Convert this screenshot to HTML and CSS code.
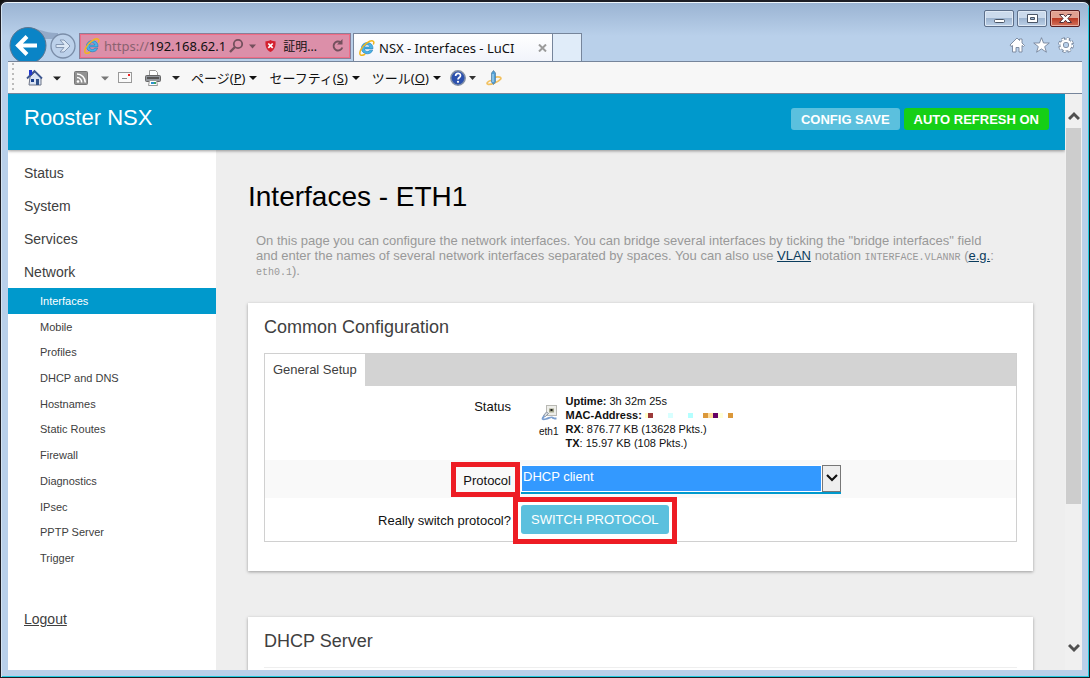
FILE: index.html
```html
<!DOCTYPE html>
<html lang="en">
<head>
<meta charset="utf-8">
<title>NSX - Interfaces - LuCI</title>
<link rel="stylesheet" href="styles.css">
</head>
<body>
<svg class="defs" width="0" height="0" aria-hidden="true">
  <symbol id="ie" viewBox="0 0 16 16">
    <path d="M13.9 8.9H5.4c.2 1.7 1.400 2.500 2.900 2.500 1.200 0 2-.4 2.600-1.200h2.800c-.8 2.300-2.800 3.600-5.400 3.600-3.400 0-5.900-2.300-5.900-5.500 0-3.300 2.500-5.700 5.900-5.700 3.600 0 5.900 2.500 5.600 6.300zM5.500 7h5.300c-.2-1.400-1.200-2.200-2.600-2.200S5.800 5.600 5.500 7z" fill="#49b3e6" stroke="#1d78b5" stroke-width=".6"/>
    <path d="M14.300 4.500C15.200 2.700 15 1.200 13.700.9 10.500.3 4.600 4.600 2 9.300.4 12.200.4 14.700 2 15.200c1 .3 2.600-.2 4.200-1.200" fill="none" stroke="#f2b61c" stroke-width="1.500"/>
  </symbol>
</svg>
<div class="window">
  <header class="chrome">
    <div class="titlebar">
      <button class="win-btn" aria-label="Minimize"><svg width="30" height="16"><rect x="10.500" y="8.500" width="10" height="3" rx="1" fill="#fff" stroke="#4a5566"/></svg></button>
      <button class="win-btn" aria-label="Maximize"><svg width="30" height="16"><path d="M10.500 3.500h10v8h-10zM13.500 6.500h4v2h-4z" fill="#fff" fill-rule="evenodd" stroke="#4a5566"/></svg></button>
      <button class="win-btn win-close" aria-label="Close"><svg width="30" height="16"><path d="M9.500 3.500h4l2 2.200 2-2.200h4l-3.600 4 3.600 4h-4l-2-2.200-2 2.200h-4l3.600-4z" fill="#fff" stroke="#50303a"/></svg></button>
    </div>
    <div class="navrow">
      <svg class="nav-buttons" width="70" height="34" viewBox="0 0 70 34">
        <path d="M20 .5c12 1 17 6 30 5.500v6H30z" fill="#94aac8"/>
        <circle cx="20" cy="18.500" r="18" fill="#0a84c6" stroke="#5d7690"/>
        <path d="M10 18.500h19M19 9.500l-9 9 9 9" fill="none" stroke="#fff" stroke-width="4"/>
        <circle cx="55" cy="19" r="12" fill="#bcd1ea" stroke="#7a8da8" stroke-width="1.300"/>
        <path d="M48 17.500h8l-4-4.500h4l6 6-6 6h-4l4-4.500h-8z" fill="#dce8f5" stroke="#8497b2"/>
      </svg>
      <div class="address">
        <svg width="16" height="16"><use href="#ie"/></svg>
        <span class="url"><span class="scheme">https://</span>192.168.62.1</span>
        <svg class="search" width="28" height="16" viewBox="0 0 28 16"><circle cx="9" cy="6" r="4.200" fill="none" stroke="#74505d" stroke-width="1.800"/><path d="M6 9l-5 5" stroke="#74505d" stroke-width="2.400"/><path d="M20 6.500h7l-3.500 4z" fill="#74505d"/></svg>
        <svg class="shield" width="11" height="12" viewBox="0 0 11 12"><path d="M5.500 0c2 1.200 3.500 1.200 5 1.200C11 6 9.500 10 5.500 12 1.500 10 0 6 .5 1.200 2 1.200 3.500 1.200 5.500 0z" fill="#d4202e"/><path d="M3.300 3.500l4.400 4.400m0-4.400L3.300 7.900" stroke="#fff" stroke-width="1.700"/></svg>
        <span class="cert">証明...</span>
        <svg class="reload" width="14" height="14" viewBox="0 0 14 14"><path d="M11.300 8.500a4.500 4.500 0 1 1-1.600-5.200" fill="none" stroke="#74505d" stroke-width="1.900"/><path d="M11.500 0v5.500H6z" fill="#74505d"/></svg>
      </div>
      <div class="tab">
        <svg width="16" height="16"><use href="#ie"/></svg>
        <span class="tab-title">NSX - Interfaces - LuCI</span>
        <svg width="9" height="8" viewBox="0 0 9 8"><path d="M1 .5l7 7m0-7l-7 7" stroke="#9b9b9b" stroke-width="2"/></svg>
      </div>
      <div class="new-tab"></div>
      <div class="tools">
        <svg width="16" height="16" viewBox="0 0 16 16"><path d="M1 8l7-7 2.500 2.500V2h2.500v4l2.500 2.500-1 1-1.500-1V15H10v-4.500H7V15H3.500V8.500l-1.500 1z" fill="#fff" stroke="#76859b" stroke-width=".9"/></svg>
        <svg width="17" height="16" viewBox="0 0 17 16"><path d="M8.500.7l2 5.300h5.800l-4.600 3.600 1.700 5.600-4.900-3.300-4.900 3.300 1.700-5.600L.7 6h5.800z" fill="#fff" stroke="#76859b" stroke-width=".9"/></svg>
        <svg width="16" height="16" viewBox="0 0 16 16"><g fill="none"><circle cx="8" cy="8" r="6.400" stroke="#76859b" stroke-width="3" stroke-dasharray="3.200 1.827"/><circle cx="8" cy="8" r="4.300" stroke="#76859b" stroke-width="4.200"/><circle cx="8" cy="8" r="6.300" stroke="#fff" stroke-width="1.800" stroke-dasharray="2.200 2.748"/><circle cx="8" cy="8" r="4.300" stroke="#fff" stroke-width="2.600"/></g></svg>
      </div>
    </div>
  </header>
  <nav class="commandbar">
    <span class="grip"></span>
    <svg class="cmd home" width="36" height="18" viewBox="0 0 36 18"><path d="M4 8l5-5 6 6v7H3z" fill="#d9e3f3" stroke="#6f7688"/><path d="M1 9.500L8.500 2l7.500 7.500" fill="none" stroke="#3d568f" stroke-width="1.800"/><path d="M3 1h3v5H3z" fill="#2338ce"/><path d="M5 10h3v3H5z" fill="#183d8b"/><path d="M10 10h3v6h-3z" fill="#31528b"/><path d="M27 7.500h8l-4 4z" fill="#222"/></svg>
    <svg class="cmd feed" width="36" height="16" viewBox="0 0 36 16"><rect x=".5" y="1.500" width="13" height="13" rx="1" fill="#929292" stroke="#777"/><circle cx="4" cy="11.500" r="1.300" fill="#fff"/><path d="M3 7.500a5 5 0 0 1 4.700 5M3 4a8.500 8.500 0 0 1 8.300 8.500" fill="none" stroke="#fff" stroke-width="1.600"/><path d="M27 6.500h8l-4 4z" fill="#777"/></svg>
    <svg class="cmd mail" width="15" height="11" viewBox="0 0 15 11"><rect x=".5" y=".5" width="13" height="10" fill="#fafafa" stroke="#999"/><path d="M4 6.500h5" stroke="#888"/><path d="M10 2h2v2h-2z" fill="#e22"/></svg>
    <svg class="cmd print" width="36" height="16" viewBox="0 0 36 16"><path d="M4.500.5h6l2 2v4h-8z" fill="#fff" stroke="#999"/><rect x=".5" y="5.500" width="15" height="6" rx="1" fill="#92969c" stroke="#666"/><path d="M2 8h12" stroke="#555" stroke-width="2"/><path d="M4.500 10.500h7l1 5h-9z" fill="#fff" stroke="#999"/><path d="M6 12h3v2H6z" fill="#2e92cf"/><path d="M9 12h2v2H9z" fill="#3aa36b"/><path d="M27 6h8l-4 4z" fill="#222"/></svg>
    <button class="menu">ページ(<u>P</u>)<i class="caret"></i></button>
    <button class="menu">セーフティ(<u>S</u>)<i class="caret"></i></button>
    <button class="menu">ツール(<u>O</u>)<i class="caret"></i></button>
    <svg class="cmd help" width="28" height="16" viewBox="0 0 28 16"><circle cx="8" cy="8" r="7.200" fill="#2c51ae" stroke="#8491a5" stroke-width="1.500"/><path d="M5.600 6c0-3.400 5-3.400 4.900-.3C10.400 7.500 8 7.500 8 9.500" fill="none" stroke="#fff" stroke-width="1.700"/><circle cx="8" cy="11.800" r="1.100" fill="#fff"/><path d="M19 6h7l-3.500 4z" fill="#333"/></svg>
    <svg class="cmd" width="16" height="16" viewBox="0 0 16 16"><path d="M8 7.500c5-1.500 8 0 6.500 1.800-2 2.300-9.500 5.700-12.500 5-2.500-.8.500-3.300 3-3.800" fill="none" stroke="#f2c15f" stroke-width="1.700"/><path d="M5.500 3l2-2.500 2 2.500v9l-2 2.500-2-2.500z" fill="#4e9fd6" stroke="#517b9e" stroke-width=".7"/><path d="M7 4v8" stroke="#bfe4fa"/></svg>
  </nav>
  <div class="viewport">
    <div class="page">
      <header class="app-header">
        <a class="brand" href="#">Rooster NSX</a>
        <button class="badge">CONFIG SAVE</button>
        <button class="badge badge-on">AUTO REFRESH ON</button>
      </header>
      <div class="app-body">
        <nav class="sidebar">
          <ul class="menu-list">
            <li><a href="#">Status</a></li>
            <li><a href="#">System</a></li>
            <li><a href="#">Services</a></li>
            <li><a href="#">Network</a></li>
          </ul>
          <ul class="submenu">
            <li class="active"><a href="#">Interfaces</a></li>
            <li><a href="#">Mobile</a></li>
            <li><a href="#">Profiles</a></li>
            <li><a href="#">DHCP and DNS</a></li>
            <li><a href="#">Hostnames</a></li>
            <li><a href="#">Static Routes</a></li>
            <li><a href="#">Firewall</a></li>
            <li><a href="#">Diagnostics</a></li>
            <li><a href="#">IPsec</a></li>
            <li><a href="#">PPTP Server</a></li>
            <li><a href="#">Trigger</a></li>
          </ul>
          <a class="logout" href="#">Logout</a>
        </nav>
        <main class="content">
          <h1>Interfaces - ETH1</h1>
          <p class="intro">On this page you can configure the network interfaces. You can bridge several interfaces by ticking the "bridge interfaces" field and enter the names of several network interfaces separated by spaces. You can also use <a href="#">VLAN</a> notation <code>INTERFACE.VLANNR</code> (<a href="#">e.g.</a>: <code>eth0.1</code>).</p>
          <section class="card">
            <h2>Common Configuration</h2>
            <div class="panel">
              <div class="tabs"><a class="tab-item" href="#">General Setup</a></div>
              <div class="row row-status">
                <span class="label">Status</span>
                <div class="field status">
                  <div class="iface">
                    <svg width="16" height="16" viewBox="0 0 16 16"><rect x="5.500" y=".5" width="10" height="10" fill="#eeeeea" stroke="#b9b9b4"/><path d="M8 3.500h5v4H8z" fill="#a4a78c"/><path d="M9.500 4h2v2h-2z" fill="#1d1d1d"/><path d="M5.500 7l2 1.500-3 3-2-1z" fill="#d7dce2" stroke="#8d97a1"/><path d="M3.500 11C0 14 1.500 15 5 14s6-2.500 6.500-1.500S13 13.500 15.500 13.500" fill="none" stroke="#7c9fd0" stroke-width="1.800"/></svg>
                    <span>eth1</span>
                  </div>
                  <div class="stats">
                    <b>Uptime:</b> 3h 32m 25s<br>
                    <b>MAC-Address:</b><svg class="mosaic" width="92" height="5"><path d="M3 0h4v5H3z" fill="#ffffc8"/><path d="M6 0h5v5H6z" fill="#9c3a3a"/><path d="M26 0h5v5h-5z" fill="#d8ffff"/><path d="M46 0h5v5h-5z" fill="#b4ffff"/><path d="M61 0h5v5h-5z" fill="#db983a"/><path d="M66 0h5v5h-5z" fill="#ffdb98"/><path d="M71 0h5v5h-5z" fill="#660066"/><path d="M76 0h5v5h-5z" fill="#ffffd8"/><path d="M86 0h5v5h-5z" fill="#db983a"/></svg><br>
                    <b>RX</b>: 876.77 KB (13628 Pkts.)<br>
                    <b>TX</b>: 15.97 KB (108 Pkts.)
                  </div>
                </div>
              </div>
              <div class="row row-protocol">
                <label class="label marked" for="protocol">Protocol</label>
                <div class="field select-box">
                  <select id="protocol"><option>DHCP client</option></select>
                  <span class="select-arrow"><svg width="12" height="8" viewBox="0 0 12 8"><path d="M1 1l5 5 5-5" fill="none" stroke="#111" stroke-width="2.200"/></svg></span>
                </div>
              </div>
              <div class="row row-switch">
                <span class="label">Really switch protocol?</span>
                <div class="field"><span class="marked"><button class="switch">SWITCH PROTOCOL</button></span></div>
              </div>
            </div>
          </section>
          <section class="card">
            <h2>DHCP Server</h2>
            <div class="rule"></div>
          </section>
        </main>
      </div>
    </div>
    <div class="scrollbar">
      <svg width="12" height="34" viewBox="0 0 12 34"><path d="M1 25l5-5 5 5" fill="none" stroke="#505050" stroke-width="3"/></svg>
      <div class="track"><div class="thumb"></div></div>
      <svg width="12" height="34" viewBox="0 0 12 34"><path d="M1 9l5 5 5-5" fill="none" stroke="#505050" stroke-width="3"/></svg>
    </div>
  </div>
</div>
</body>
</html>
```
FILE: styles.css
```css
* { box-sizing: border-box; }
body {
  margin: 0;
  background: #111;
  font-family: "Liberation Sans", Arial, sans-serif;
  color: #404040;
}
svg { display: block; flex: none; }
.defs { position: absolute; }
button { font-family: inherit; cursor: pointer; }
ul { margin: 0; padding: 0; list-style: none; }

.window {
  display: flex;
  flex-direction: column;
  height: 100vh;
  padding: 0 6px 6px;
  background: linear-gradient(#9ab3d2, #b9d0ea 34px);
  border: 1px solid #1d1d24;
  border-top-width: 2px;
  border-radius: 7px 7px 0 0;
  box-shadow: inset 0 1px #eef5fb, inset 1px 0 #d5e4f2, inset -1px -1px #21cbe0;
}
.titlebar {
  display: flex;
  justify-content: flex-end;
  gap: 3px;
  padding: 8px 3px 0 0;
  height: 25px;
}
.win-btn {
  width: 30px;
  height: 17px;
  padding: 0;
  overflow: hidden;
  border: 1px solid #5d6f8a;
  border-radius: 2px;
  background: linear-gradient(#cbdaec 45%, #9db4d0 50%, #bdd1e8);
  box-shadow: inset 0 0 0 1px #dfe9f5;
}
.win-btn svg { margin: -1px; }
.win-close {
  border-color: #591c1f;
  background: linear-gradient(#e0a091 45%, #b93a25 50%, #d4735c);
  box-shadow: inset 0 0 0 1px #e8b0a4;
}
.navrow {
  display: flex;
  height: 34px;
  font: 13px "Noto Sans", "Noto Sans CJK JP", sans-serif;
  color: #111;
}
.nav-buttons { margin: 0 1px; }
.address {
  display: flex;
  align-items: center;
  width: 272px;
  height: 26px;
  margin: 6px 2px 0 0;
  padding: 0 5px 0 4px;
  background: #dc8fa9;
  border: 1px solid #8a7f98;
  box-shadow: inset 0 0 0 1px #ef6c86;
}
.url { margin-left: 4px; }
.scheme { color: #8a6270; }
.search { margin-left: 3px; }
.shield { margin-left: 8px; }
.cert { margin-left: 7px; font-size: 12px; }
.reload { margin-left: auto; }
.tab {
  display: flex;
  align-items: center;
  width: 200px;
  height: 28px;
  margin-top: 6px;
  padding: 0 5px;
  background: linear-gradient(#fff, #f1f4fb);
  border: 1px solid #76859b;
  border-bottom: 0;
}
.tab-title { flex: 1; margin-left: 4px; }
.new-tab {
  width: 29px;
  height: 28px;
  margin-top: 6px;
  background: #e0ecf9;
  border: solid #76859b;
  border-width: 1px 1px 0 0;
}
.tools {
  display: flex;
  gap: 8px;
  margin: 10px 9px 0 auto;
}

.commandbar {
  position: relative;
  display: flex;
  align-items: center;
  flex: none;
  height: 33px;
  margin: 0 1px;
  background: #f7f7f7;
  border: solid #76859b;
  border-width: 1px 0;
}
.grip {
  width: 2px;
  height: 30px;
  margin: 0 12px 0 4px;
  background: repeating-linear-gradient(#bbb 0 2px, #f7f7f7 2px 5px);
}
.home { margin-right: 12px; }
.feed { margin-right: 8px; }
.mail { margin-right: 12px; }
.print { margin-right: 10px; }
.menu {
  display: flex;
  align-items: center;
  margin-right: 12px;
  padding: 0;
  background: none;
  border: 0;
  color: #111;
  font: 13px "Noto Sans", "Noto Sans CJK JP", sans-serif;
}
.caret {
  margin-left: 4px;
  border: 4px solid transparent;
  border-top-color: #111;
  border-bottom-width: 0;
}
.help { margin: 0 8px 0 -3px; }

.viewport {
  display: flex;
  flex: 1;
  min-height: 0;
  margin: 0 1px 1px;
  background: #eee;
}
.page {
  display: flex;
  flex-direction: column;
  flex: 1;
  min-width: 0;
  overflow: hidden;
}
.app-header {
  position: relative;
  display: flex;
  align-items: flex-start;
  gap: 4px;
  flex: none;
  height: 56px;
  padding: 14px 16px 0;
  background: #0099cc;
  box-shadow: 0 1px 3px rgba(0, 0, 0, .4);
}
.brand {
  margin-right: auto;
  margin-top: -4px;
  color: #fff;
  font-size: 22px;
  line-height: 28px;
  text-decoration: none;
}
.badge {
  height: 22px;
  padding: 0 10px;
  border: 0;
  border-radius: 3px;
  background: #5bc0de;
  color: #fff;
  font-size: 13px;
  font-weight: bold;
}
.badge-on { background: #16cf16; }
.app-body {
  display: flex;
  flex: 1;
  min-height: 0;
}
.sidebar {
  width: 208px;
  flex: none;
  padding-top: 7px;
  background: #fff;
}
.sidebar a { color: #404040; text-decoration: none; }
.menu-list {
  display: grid;
  gap: 1px;
  padding-left: 16px;
  font-size: 14px;
  line-height: 32px;
}
.submenu {
  display: grid;
  min-height: 283px;
  font-size: 11px;
  line-height: 24px;
}
.submenu li { display: flex; align-items: center; padding-left: 32px; }
.submenu .active { background: #0099cc; }
.submenu .active a { color: #fff; }
.sidebar .logout {
  display: inline-block;
  margin: 40px 16px;
  font-size: 14px;
  line-height: 16px;
  text-decoration: underline;
}
.content {
  flex: 1;
  min-width: 0;
  padding: 31px 32px 0;
  overflow: hidden;
}
h1 {
  margin: 0 0 20px;
  color: #000;
  font-size: 28px;
  font-weight: normal;
  line-height: 32px;
}
.intro {
  margin: 0 0 25px;
  padding: 0 32px 0 8px;
  color: #999;
  font-size: 13px;
  line-height: 15px;
}
.intro a { color: #0b3c5d; }
.intro code { font: 10px "Liberation Mono", monospace; }
.card {
  margin-bottom: 46px;
  padding: 14px 16px 29px;
  background: #fff;
  box-shadow: 0 1px 3px rgba(0, 0, 0, .35);
}
h2 {
  margin: 0 0 16px;
  font-size: 18px;
  font-weight: normal;
  line-height: 20px;
}
.rule { border-top: 1px solid #eee; }
.panel { border: 1px solid #d0d0d0; }
.tabs { display: flex; background: #d3d3d3; }
.tab-item {
  padding: 0 8px;
  background: #fff;
  color: #404040;
  font-size: 13px;
  line-height: 32px;
  text-decoration: none;
}
.row {
  display: flex;
  color: #111;
  font-size: 13px;
}
.label {
  display: block;
  width: 246px;
  flex: none;
  text-align: right;
  line-height: 16px;
}
.field { margin-left: 10px; }
.row-status { padding: 8px 0 9px; min-height: 74px; }
.row-status .label { margin-top: 5px; }
.status {
  display: flex;
  gap: 7px;
  padding-left: 18px;
  font-size: 11px;
  line-height: 14px;
}
.iface {
  display: flex;
  flex-direction: column;
  align-items: center;
  gap: 4px;
  padding-top: 11px;
  font-size: 10px;
}
.mosaic { display: inline-block; vertical-align: 1px; }
.row-protocol {
  align-items: center;
  min-height: 38px;
  background: #f9f9f9;
}
.row-protocol .label { margin-top: 3px; }
.marked { position: relative; }
.marked::after {
  content: "";
  position: absolute;
  border: 5px solid #ed1c24;
  pointer-events: none;
  z-index: 1;
}
.label.marked::after { inset: -11px -9px -8px 186px; }
.select-box {
  position: relative;
  width: 320px;
  border-bottom: 2px solid #0099cc;
}
.select-box select {
  display: block;
  appearance: none;
  width: 100%;
  height: 27px;
  padding: 0 0 3px 1px;
  border: 1px solid #fff;
  border-radius: 0;
  background: #3399ff;
  color: #fff;
  font: 13px "Liberation Sans", Arial, sans-serif;
}
.select-arrow {
  position: absolute;
  top: 0;
  right: 0;
  display: grid;
  place-items: center;
  width: 19px;
  height: 27px;
  background: #eee;
  border: 1px solid #777;
  box-shadow: -1px 0 #fff;
  pointer-events: none;
}
.row-switch { padding: 7px 0; }
.row-switch .label { margin-top: 8px; }
.row-switch .marked { display: block; }
.row-switch .marked::after { inset: -8px -8px -10px; }
.switch {
  display: block;
  height: 29px;
  padding: 0 10px;
  border: 0;
  border-radius: 3px;
  background: #5bc0de;
  color: #fff;
  font-size: 13px;
}

.scrollbar {
  display: flex;
  flex-direction: column;
  align-items: center;
  width: 17px;
  background: #f0f0f0;
}
.track { flex: 1; width: 15px; }
.thumb { height: 74%; background: #cdcdcd; }
```
